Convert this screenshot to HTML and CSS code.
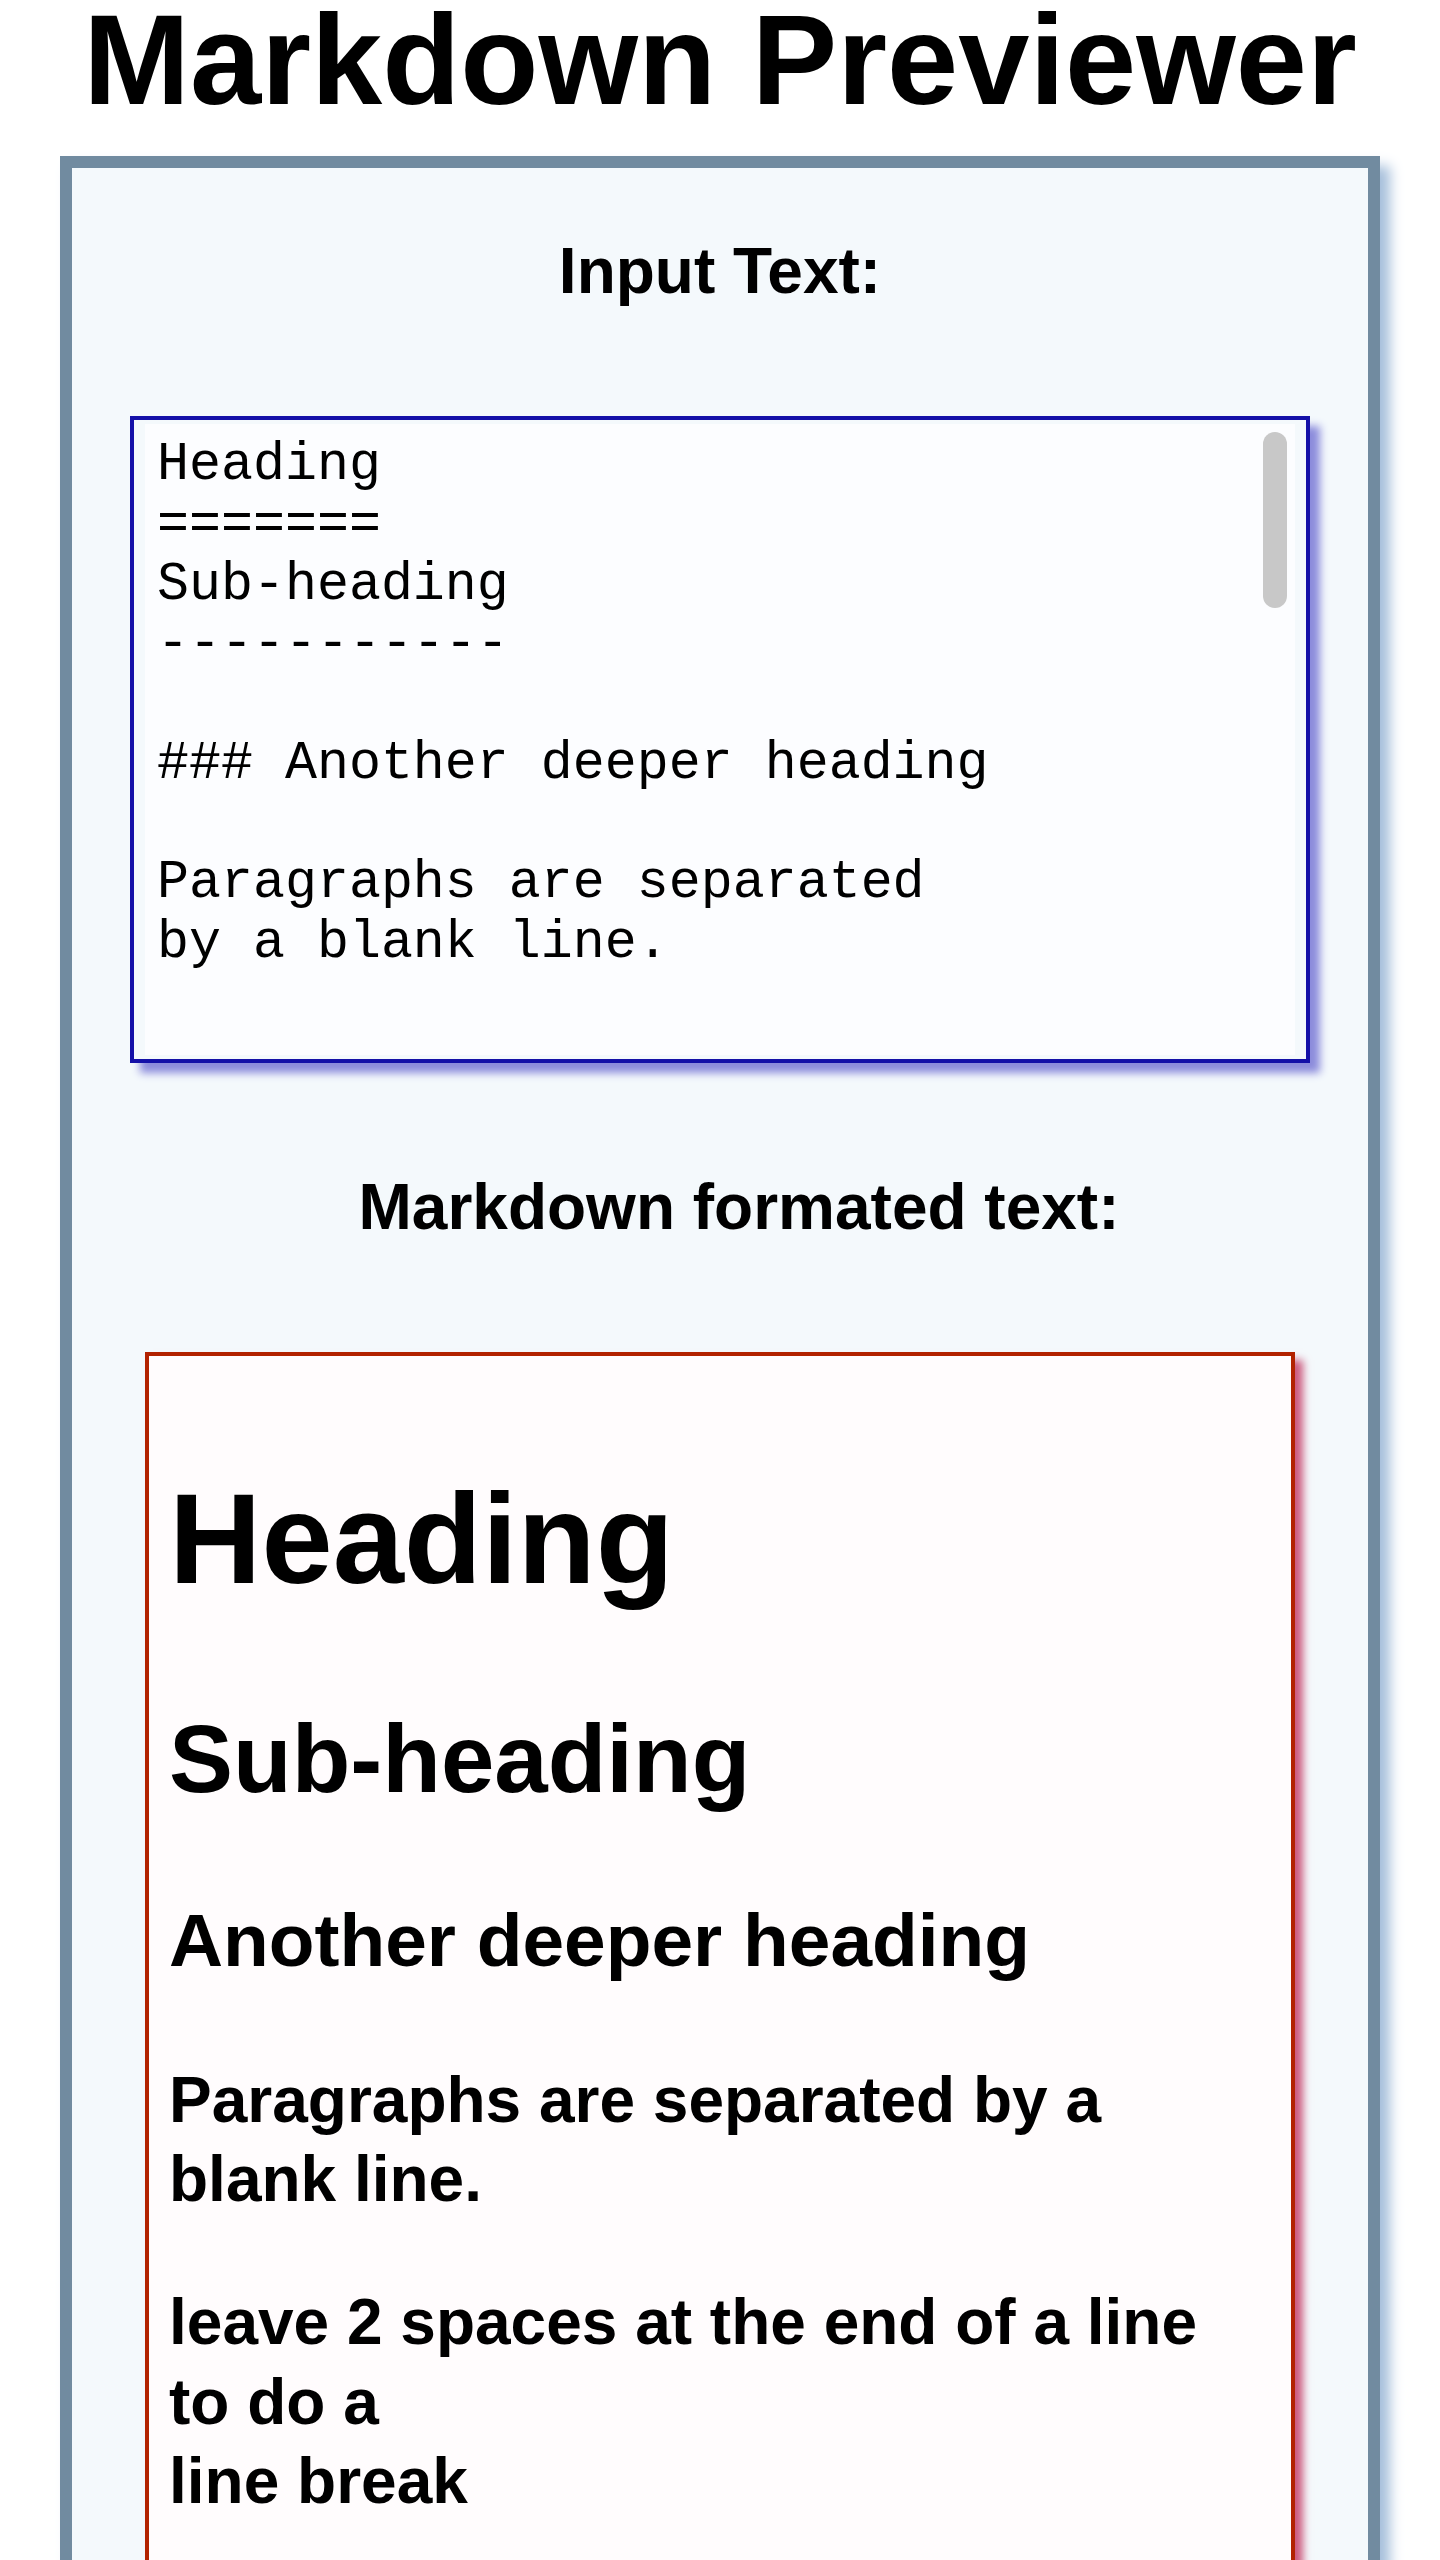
FILE: index.html
```html
<!DOCTYPE html>
<html lang="en">
<head>
<meta charset="utf-8">
<title>Markdown Previewer</title>
<link rel="stylesheet" href="styles.css">
</head>
<body>
<h1 class="title">Markdown Previewer</h1>
<main class="app">
  <h2 class="section-title">Input Text:</h2>
  <div class="editor-frame">
<textarea class="editor" spellcheck="false">Heading
=======
Sub-heading
-----------

### Another deeper heading

Paragraphs are separated
by a blank line.


leave 2 spaces at the end of a line to do a  
line break

Text attributes *italic*, **bold**,
`monospace`, ~~strikethrough~~ .

Shopping list:

  * apples
  * oranges
  * pears

Numbered list:

  1. apples
  2. oranges
  3. pears

> Block quotes are
> written like so.

    code block

The rainbow: [link](https://www.freecodecamp.org)

![image](logo.png)
</textarea>
    <span class="scroll-thumb" aria-hidden="true"></span>
  </div>
  <h2 class="section-title preview-title">Markdown formated text:</h2>
  <div class="preview">
    <h1>Heading</h1>
    <h2>Sub-heading</h2>
    <h3>Another deeper heading</h3>
    <p>Paragraphs are separated by a blank line.</p>
    <p>leave 2 spaces at the end of a line to do a<br>line break</p>
    <p>Text attributes <em>italic</em>, <strong>bold</strong>, <code>monospace</code>, <del>strikethrough</del> .</p>
    <p>Shopping list:</p>
    <ul>
      <li>apples</li>
      <li>oranges</li>
      <li>pears</li>
    </ul>
    <p>Numbered list:</p>
    <ol>
      <li>apples</li>
      <li>oranges</li>
      <li>pears</li>
    </ol>
  </div>
</main>
</body>
</html>
```
FILE: styles.css
```css
html, body {
  margin: 0;
  padding: 0;
  background: #ffffff;
}

body {
  font-family: "Liberation Sans", Arial, sans-serif;
  color: #000000;
}

.title {
  margin: 0;
  font-size: 128px;
  line-height: 120px;
  font-weight: bold;
  text-align: center;
}

.app {
  width: 1320px;
  box-sizing: border-box;
  margin: 36px auto 0;
  border: 12px solid #718ba0;
  background: #f4f9fc;
  box-shadow: 10px 10px 12px #a6bfdb;
  padding-bottom: 120px;
}

.section-title {
  margin: 65px 0 106px;
  font-size: 64px;
  line-height: 77px;
  font-weight: bold;
  text-align: center;
}

.preview-title {
  margin-top: 106px;
  padding-left: 38px;
}

.editor-frame {
  position: relative;
  width: 1180px;
  box-sizing: border-box;
  margin: 0 auto;
  border: 4px solid #1410a8;
  padding: 4px 11px;
  box-shadow: 10px 10px 8px #8c8cdc;
}

.editor {
  display: block;
  width: 100%;
  height: 631px;
  box-sizing: border-box;
  margin: 0;
  border: 0;
  padding: 12px 52px 12px 12px;
  font-family: "Courier New", "Nimbus Mono PS", "Nimbus Mono L", FreeMono, Courier, "Liberation Mono", monospace;
  font-size: 53.3px;
  line-height: 59.75px;
  color: #000000;
  background: #fcfdff;
  resize: none;
  outline: none;
  overflow: hidden;
  scrollbar-width: none;
}

.scroll-thumb {
  position: absolute;
  top: 12px;
  right: 19px;
  width: 24px;
  height: 176px;
  border-radius: 12px;
  background: #c8c8c8;
}

.preview {
  width: 1150px;
  box-sizing: border-box;
  margin: 0 auto;
  border: 4px solid #b22200;
  padding: 20px;
  background: #fffcfd;
  box-shadow: 8px 8px 8px #cc5a7e;
  font-size: 64px;
  font-weight: bold;
}

.preview h1 {
  font-size: 2em;
  line-height: 1.2;
  margin: 0.67em 0;
}

.preview h2 {
  font-size: 1.5em;
  line-height: 1.2;
  margin: 0.83em 0;
}

.preview h3 {
  font-size: 1.17em;
  line-height: 1.2;
  margin: 1em 0;
}

.preview p,
.preview ul,
.preview ol {
  line-height: 1.24;
  margin: 1em 0;
}
```
